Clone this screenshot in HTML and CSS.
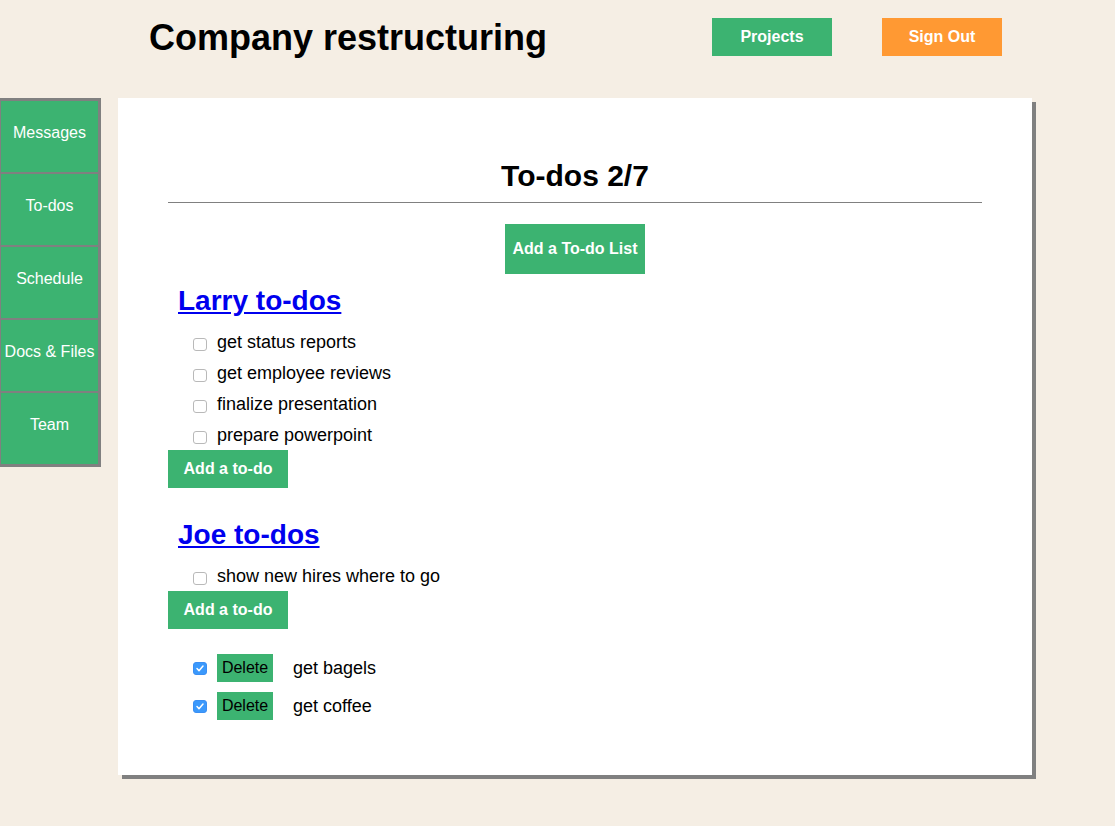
FILE: index.html
```html
<!DOCTYPE html>
<html lang="en">
<head>
<meta charset="utf-8">
<title>Company restructuring</title>
<link rel="stylesheet" href="styles.css">
</head>
<body>
  <header class="topbar">
    <h1 class="project-title">Company restructuring</h1>
    <nav class="top-actions">
      <a class="btn btn-green" href="#">Projects</a>
      <a class="btn btn-orange" href="#">Sign Out</a>
    </nav>
  </header>
  <div class="main">
    <aside class="sidebar">
      <a class="side-item" href="#">Messages</a>
      <a class="side-item" href="#">To-dos</a>
      <a class="side-item" href="#">Schedule</a>
      <a class="side-item" href="#">Docs &amp; Files</a>
      <a class="side-item" href="#">Team</a>
    </aside>
    <section class="card">
      <h2 class="card-title">To-dos 2/7</h2>
      <hr class="divider">
      <div class="center-row">
        <button class="btn btn-green btn-big">Add a To-do List</button>
      </div>

      <div class="list">
        <h3 class="list-title"><a href="#">Larry to-dos</a></h3>
        <ul class="items">
          <li class="item"><input type="checkbox" class="check"><span>get status reports</span></li>
          <li class="item"><input type="checkbox" class="check"><span>get employee reviews</span></li>
          <li class="item"><input type="checkbox" class="check"><span>finalize presentation</span></li>
          <li class="item"><input type="checkbox" class="check"><span>prepare powerpoint</span></li>
        </ul>
        <button class="btn btn-green">Add a to-do</button>
      </div>

      <div class="list">
        <h3 class="list-title"><a href="#">Joe to-dos</a></h3>
        <ul class="items">
          <li class="item"><input type="checkbox" class="check"><span>show new hires where to go</span></li>
        </ul>
        <button class="btn btn-green">Add a to-do</button>
      </div>

      <ul class="done">
        <li class="done-item"><input type="checkbox" class="check" checked><button class="btn-delete">Delete</button><span>get bagels</span></li>
        <li class="done-item"><input type="checkbox" class="check" checked><button class="btn-delete">Delete</button><span>get coffee</span></li>
      </ul>
    </section>
  </div>
</body>
</html>
```

FILE: styles.css
```css
* { box-sizing: border-box; }

html, body {
  margin: 0;
  padding: 0;
}

body {
  background: #f5eee4;
  font-family: "Liberation Sans", Arial, Helvetica, sans-serif;
  color: #000;
  width: 1115px;
  min-height: 826px;
}

.topbar {
  display: flex;
  align-items: flex-start;
  height: 98px;
  padding: 18px 113px 0 149px;
}

.project-title {
  margin: 0;
  font-size: 36px;
  line-height: 40px;
  font-weight: bold;
}

.top-actions {
  margin-left: auto;
  display: flex;
  gap: 50px;
}

.btn {
  display: inline-flex;
  align-items: center;
  justify-content: center;
  width: 120px;
  height: 38px;
  border: none;
  padding: 0;
  color: #fff;
  font-family: "Liberation Sans", Arial, Helvetica, sans-serif;
  font-size: 16px;
  font-weight: bold;
  text-decoration: none;
  cursor: pointer;
}

.btn-green { background: #3cb371; }
.btn-orange { background: #ff9933; }

.btn-big {
  width: 140px;
  height: 50px;
}

.main {
  display: flex;
  align-items: flex-start;
  gap: 17px;
}

.sidebar {
  width: 101px;
  display: flex;
  flex-direction: column;
  border: 3px solid #808080;
  border-left-width: 1px;
  background: #808080;
  gap: 2px;
}

.side-item {
  display: block;
  height: 71px;
  padding-top: 23px;
  background: #3cb371;
  color: #fff;
  font-size: 16px;
  line-height: 18px;
  text-align: center;
  text-decoration: none;
  white-space: nowrap;
}

.card {
  width: 914px;
  height: 677px;
  background: #fff;
  box-shadow: 4px 4px 0 #808080;
  padding: 60px 50px 0;
}

.card-title {
  margin: 0;
  font-size: 30px;
  line-height: 36px;
  text-align: center;
  font-weight: bold;
}

.divider {
  margin: 8px 0 0;
  border: none;
  border-top: 1px solid #808080;
  height: 0;
}

.center-row {
  display: flex;
  justify-content: center;
  margin-top: 21px;
}

.list {
  margin-top: 31px;
}

.center-row + .list {
  margin-top: 11px;
}

.list-title {
  margin: 0;
  padding-left: 10px;
  font-size: 28px;
  line-height: 32px;
  font-weight: bold;
}

.list-title a {
  color: #0000ee;
  text-decoration: underline;
}

.items {
  list-style: none;
  margin: 10px 0 -1px;
  padding: 0;
}

.item {
  display: flex;
  align-items: center;
  height: 31px;
  padding-left: 25px;
  font-size: 18px;
  line-height: 31px;
}

.item .check {
  margin: 4px 10px 0 0;
}

.check {
  -webkit-appearance: none;
  appearance: none;
  width: 14px;
  height: 13px;
  flex: none;
  margin: 0 10px 0 0;
  border: 1px solid #b9b9b9;
  border-radius: 3px;
  background: #fff;
}

.check:checked {
  border-color: #3b8ff3;
  background-color: #3b99fc;
  background-image: url("data:image/svg+xml,%3Csvg xmlns='http://www.w3.org/2000/svg' viewBox='0 0 12 11'%3E%3Cpath d='M3 5.6 L5 7.8 L9 3' fill='none' stroke='white' stroke-width='1.5' stroke-linecap='round' stroke-linejoin='round'/%3E%3C/svg%3E");
  background-size: 100% 100%;
  background-repeat: no-repeat;
}

.done {
  list-style: none;
  margin: 25px 0 0;
  padding: 0;
  display: flex;
  flex-direction: column;
  gap: 10px;
}

.done-item {
  display: flex;
  align-items: center;
  height: 28px;
  padding-left: 25px;
  font-size: 18px;
  line-height: 26px;
}

.btn-delete {
  height: 28px;
  width: 56px;
  padding: 0;
  margin-right: 20px;
  border: none;
  background: #3cb371;
  color: #000;
  font-family: "Liberation Sans", Arial, Helvetica, sans-serif;
  font-size: 16px;
  line-height: 28px;
}
```
